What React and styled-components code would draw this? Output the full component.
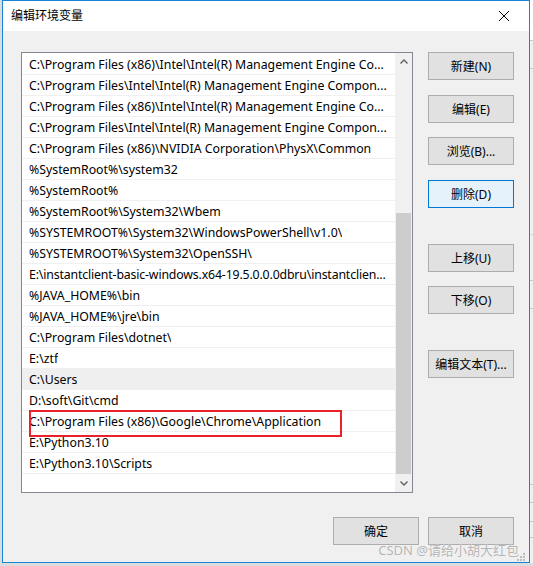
import React from "react";
import styled, { createGlobalStyle } from "styled-components";

const GlobalStyle = createGlobalStyle`
  html, body {
    margin: 0;
    padding: 0;
    background: #dcdcdc;
  }
  body {
    font-family: "Noto Sans", "Noto Sans CJK SC", sans-serif;
    font-size: 12px;
    color: #000;
  }
`;

// long entries are already cut the way the list view shows them
const paths = [
  { text: "C:\\Program Files (x86)\\Intel\\Intel(R) Management Engine Co..." },
  { text: "C:\\Program Files\\Intel\\Intel(R) Management Engine Compon..." },
  { text: "C:\\Program Files (x86)\\Intel\\Intel(R) Management Engine Co..." },
  { text: "C:\\Program Files\\Intel\\Intel(R) Management Engine Compon..." },
  { text: "C:\\Program Files (x86)\\NVIDIA Corporation\\PhysX\\Common" },
  { text: "%SystemRoot%\\system32" },
  { text: "%SystemRoot%" },
  { text: "%SystemRoot%\\System32\\Wbem" },
  { text: "%SYSTEMROOT%\\System32\\WindowsPowerShell\\v1.0\\" },
  { text: "%SYSTEMROOT%\\System32\\OpenSSH\\" },
  {
    text: "E:\\instantclient-basic-windows.x64-19.5.0.0.0dbru\\instantclien...",
    tight: true,
  },
  { text: "%JAVA_HOME%\\bin" },
  { text: "%JAVA_HOME%\\jre\\bin" },
  { text: "C:\\Program Files\\dotnet\\" },
  { text: "E:\\ztf" },
  { text: "C:\\Users" },
  { text: "D:\\soft\\Git\\cmd" },
  { text: "C:\\Program Files (x86)\\Google\\Chrome\\Application" },
  { text: "E:\\Python3.10" },
  { text: "E:\\Python3.10\\Scripts" },
];

const HOVER_ROW = 15;
const MARKED_ROW = 17;

const Page = styled.div`
  width: 533px;
  height: 566px;
  display: flex;
  flex-direction: column;
  overflow: hidden;
`;

const Desk = styled.div`
  display: flex;
  height: 563px;
  padding-left: 2px;
`;

const Window = styled.div`
  position: relative;
  width: 528px;
  box-sizing: border-box;
  border: 1px solid #1883d7;
  display: flex;
  flex-direction: column;
  background: #f0f0f0;
`;

const TitleBar = styled.div`
  height: 30px;
  background: #fff;
  display: flex;
  align-items: center;
  justify-content: space-between;
  padding: 0 20px 0 8px;
  font-size: 12px;
  line-height: 1;
`;

const Body = styled.div`
  flex: 1;
  display: grid;
  grid-template-columns: 392px 86px;
  grid-template-rows: 441px 28px;
  column-gap: 15px;
  row-gap: 24px;
  padding: 21px 15px 17px 18px;
`;

const ListBox = styled.div`
  box-sizing: border-box;
  border: 1px solid #828790;
  background: #fff;
  display: flex;
  overflow: hidden;
`;

const Rows = styled.div`
  flex: 1;
  padding-top: 1px;
  min-width: 0;
`;

const Row = styled.div`
  position: relative;
  height: 21px;
  box-sizing: border-box;
  border-bottom: 1px solid #f0f0f0;
  padding-left: 7px;
  display: flex;
  align-items: center;
  white-space: nowrap;
  background: ${(p) => (p.$hover ? "#efefef" : "transparent")};
`;

const RowText = styled.span`
  overflow: hidden;
  font-size: 12.3px;
  letter-spacing: ${(p) => (p.$tight ? "-0.15px" : "normal")};
`;

const Marker = styled.div`
  position: absolute;
  left: 7px;
  top: -1px;
  width: 313px;
  height: 27px;
  box-sizing: border-box;
  border: 2px solid #e8222a;
  pointer-events: none;
`;

const ScrollBar = styled.div`
  width: 17px;
  background: #f0f0f0;
  display: flex;
  flex-direction: column;
`;

const ArrowBtn = styled.div`
  height: 17px;
  display: flex;
  align-items: center;
  justify-content: center;
`;

const Track = styled.div`
  flex: 1;
  display: flex;
  flex-direction: column;
  justify-content: flex-end;
  padding: 0 1px 1px;
`;

const Thumb = styled.div`
  height: 261px;
  background: #cdcdcd;
`;

const ButtonCol = styled.div`
  display: flex;
  flex-direction: column;
`;

const Button = styled.div`
  height: 28px;
  width: 86px;
  box-sizing: border-box;
  border: 1px solid ${(p) => (p.$focused ? "#0078d7" : "#adadad")};
  background: ${(p) => (p.$focused ? "#e5f1fb" : "#e1e1e1")};
  display: flex;
  align-items: center;
  justify-content: center;
  font-size: 12px;
  margin-top: ${(p) => p.$space || 0}px;
`;

const Footer = styled.div`
  grid-column: 1 / 3;
  display: flex;
  justify-content: flex-end;
  gap: 9px;
`;

const Watermark = styled.div`
  position: absolute;
  right: 10px;
  bottom: 3px;
  font-size: 13px;
  color: #b4b4b4;
  white-space: nowrap;
  text-shadow: 0 0 1px #fff;
`;

const Grip = styled.svg`
  position: absolute;
  right: 4px;
  bottom: 1px;
`;

const SideStrip = styled.div`
  width: 3px;
  background: #f0f0f0;
  display: flex;
  flex-direction: column;
`;

const StripBand = styled.div`
  height: ${(p) => p.$h}px;
  background: ${(p) => p.$bg || "#f0f0f0"};
  border-bottom: 1px solid ${(p) => p.$line || "#c8c8c8"};
`;

const Chevron = ({ up }) => (
  <svg width="8" height="5" viewBox="0 0 8 5">
    <polyline
      points={up ? "0.5,4.5 4,1 7.5,4.5" : "0.5,0.5 4,4 7.5,0.5"}
      fill="none"
      stroke="#606060"
      strokeWidth="1.4"
    />
  </svg>
);

export default function App() {
  return (
    <Page>
      <GlobalStyle />
      <Desk>
        <Window>
          <TitleBar>
            <span>编辑环境变量</span>
            <svg width="10" height="10" viewBox="0 0 10 10">
              <path d="M0 0L10 10M10 0L0 10" stroke="#000" strokeWidth="1" />
            </svg>
          </TitleBar>
          <Body>
            <ListBox>
              <Rows>
                {paths.map((p, i) => (
                  <Row key={i} $hover={i === HOVER_ROW}>
                    <RowText $tight={p.tight}>{p.text}</RowText>
                    {i === MARKED_ROW && <Marker />}
                  </Row>
                ))}
              </Rows>
              <ScrollBar>
                <ArrowBtn>
                  <Chevron up />
                </ArrowBtn>
                <Track>
                  <Thumb />
                </Track>
                <ArrowBtn>
                  <Chevron />
                </ArrowBtn>
              </ScrollBar>
            </ListBox>
            <ButtonCol>
              <Button>新建(N)</Button>
              <Button $space={15}>编辑(E)</Button>
              <Button $space={14}>浏览(B)...</Button>
              <Button $space={15} $focused>
                删除(D)
              </Button>
              <Button $space={36}>上移(U)</Button>
              <Button $space={14}>下移(O)</Button>
              <Button $space={36}>编辑文本(T)...</Button>
            </ButtonCol>
            <Footer>
              <Button>确定</Button>
              <Button>取消</Button>
            </Footer>
          </Body>
          <Watermark>CSDN @请给小胡大红包</Watermark>
          <Grip width="8" height="8" viewBox="0 0 8 8">
            <g fill="#bdbdbd">
              <rect x="6" y="0" width="2" height="2" />
              <rect x="3" y="3" width="2" height="2" />
              <rect x="6" y="3" width="2" height="2" />
              <rect x="0" y="6" width="2" height="2" />
              <rect x="3" y="6" width="2" height="2" />
              <rect x="6" y="6" width="2" height="2" />
            </g>
          </Grip>
        </Window>
        <SideStrip>
          <StripBand $h={40} $bg="#fff" />
          <StripBand $h={27} />
          <StripBand $h={165} $line="#d8d8d8" />
          <StripBand $h={45} />
          <StripBand $h={27} />
          <StripBand $h={175} />
          <StripBand $h={17} />
          <StripBand $h={18} />
          <StripBand $h={15} />
        </SideStrip>
      </Desk>
    </Page>
  );
}
